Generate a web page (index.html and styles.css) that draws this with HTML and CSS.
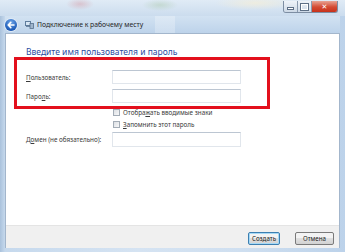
FILE: index.html
```html
<!DOCTYPE html>
<html lang="ru">
<head>
  <meta charset="utf-8">
  <title>Подключение к рабочему месту</title>
  <link rel="stylesheet" href="styles.css">
</head>
<body>

<div class="window">
  <div class="titlebar">
    <div class="caption">
      <span class="cap cap-min"><i></i></span>
      <span class="cap cap-max"><i></i></span>
      <span class="cap cap-close">✕</span>
    </div>
  </div>

  <div class="nav">
    <span class="back">
      <svg width="12" height="12" viewBox="0 0 12 12">
        <path d="M9 6H3.5M5.8 3.4L3.2 6l2.6 2.6" fill="none" stroke="#fff" stroke-width="1.6" stroke-linecap="round" stroke-linejoin="round"/>
      </svg>
    </span>
    <svg class="app-icon" width="9" height="9" viewBox="0 0 9 9">
      <rect x="0.5" y="1.5" width="5" height="4" fill="#d7e6f4" stroke="#5f7c9c"/>
      <rect x="1" y="6" width="4" height="1" fill="#6e86a3"/>
      <rect x="5" y="3.5" width="3.5" height="5" fill="#9fb5cc" stroke="#566f8c" stroke-width="0.8"/>
    </svg>
    <span class="nav-title">Подключение к рабочему месту</span>
  </div>

  <div class="panel">
    <div class="page">
      <h1>Введите имя пользователя и пароль</h1>

      <div class="form">
        <div class="row row-user">
          <label><u>П</u>ользователь:</label>
          <span class="field"></span>
        </div>
        <div class="row row-pass">
          <label>Паро<u>л</u>ь:</label>
          <span class="field"></span>
        </div>
        <div class="check check-show">
          <span class="box"></span>
          <span>Отобра<u>ж</u>ать вводимые знаки</span>
        </div>
        <div class="check check-save">
          <span class="box"></span>
          <span><u>З</u>апомнить этот пароль</span>
        </div>
        <div class="row row-domain">
          <label>Д<u>о</u>мен (не обязательно):</label>
          <span class="field"></span>
        </div>
      </div>
    </div>

    <div class="footer">
      <button class="btn btn-default">Создать</button>
      <button class="btn">Отмена</button>
    </div>
  </div>

  <div class="highlight"></div>
</div>

</body>
</html>
```

FILE: styles.css
```css
body,html { margin:0; padding:0; background:#fff; }

.window {
  position: relative;
  width: 345px;
  height: 252px;
  overflow: hidden;
  box-sizing: border-box;
  padding: 0 5px 5px;
  font-family: "Noto Sans", "DejaVu Sans", sans-serif;
  background: linear-gradient(to right, #aac2dc 0, #c6d9ed 5px, #d5e3f2 40%, #cfdff0 70%, #bcd2ea 100%);
}

/* glass title strip */
.titlebar {
  height: 16px;
  margin: 0 -5px;
  display: flex;
  justify-content: flex-end;
  background:
    radial-gradient(ellipse 14px 6px at 80px 4px, rgba(214,160,170,.5), transparent),
    radial-gradient(ellipse 18px 6px at 160px 5px, rgba(170,200,170,.45), transparent),
    radial-gradient(ellipse 40px 7px at 255px 3px, rgba(245,238,215,.7), transparent),
    linear-gradient(#e0ebf6, #cbdcee);
}
.caption {
  display: flex;
  margin: 1px 7px 0 0;
  height: 11px;
  border: 1px solid #7d8ea3;
  border-top: none;
  border-radius: 0 0 3px 3px;
  overflow: hidden;
}
.cap {
  display: flex;
  align-items: center;
  justify-content: center;
  width: 13px;
  background: linear-gradient(#eef3f9, #cdd9e6);
  border-right: 1px solid #8a9bb0;
}
.cap i { display: block; background: #fff; box-shadow: 0 0 0 1px #5d6f86; }
.cap-min i { width: 5px; height: 1px; margin-top: 4px; }
.cap-max i { width: 5px; height: 4px; background: transparent; border: 1px solid #fff; box-shadow: 0 0 0 1px #5d6f86; }
.cap-close {
  width: 25px;
  border-right: none;
  background: linear-gradient(#e8a494, #d44a32 55%, #c7321c);
  color: #fff;
  font-size: 7px;
  font-weight: bold;
}

/* navigation row */
.nav {
  height: 17px;
  display: flex;
  align-items: center;
  background:
    repeating-linear-gradient(to right, transparent 0 150px, rgba(255,255,255,.25) 150px 170px, transparent 170px 185px),
    linear-gradient(#d2e2f2, #bdd3ea);
}
.back {
  width: 12px;
  height: 12px;
  border-radius: 50%;
  background: radial-gradient(circle at 50% 30%, #6fa6e8, #1d5bb8 70%, #17479a);
  box-shadow: 0 0 0 1px #dde9f6;
  display: flex;
}
.app-icon { margin-left: 8px; }
.nav-title {
  margin-left: 3px;
  font-size: 6.8px;
  color: #262626;
}

.panel {
  height: 214px;
  display: flex;
  flex-direction: column;
  border: 1px solid #a3b6cc;
  border-bottom: none;
  background: #fff;
}

.page {
  flex: 1;
  padding: 12px 0 0 20px;
}
h1 {
  margin: 0;
  font-size: 8.5px;
  line-height: 11px;
  font-weight: normal;
  color: #2a4aa0;
}

.form {
  margin-top: 13px;
  font-size: 6.3px;
  color: #3a3a3a;
}
.row {
  display: flex;
  align-items: center;
}
.row label { width: 86px; }
.field {
  width: 129px;
  height: 14px;
  box-sizing: border-box;
  border: 1px solid #e1e6ec;
  border-top-color: #bcc6d2;
  background: #fff;
}
.row-pass { margin-top: 5px; }
.row-domain { margin-top: 3px; }
.row-domain .field { height: 15px; }

.check {
  display: flex;
  align-items: center;
  gap: 3px;
  height: 10px;
  margin-left: 87px;
}
.check-show { margin-top: 4px; }
.check-save { margin-top: 2px; }
.box {
  width: 7px;
  height: 7px;
  box-sizing: border-box;
  border: 1px solid #a3acb6;
  background: linear-gradient(135deg, #dcdfe3, #f7f8f9);
}

.footer {
  height: 23px;
  display: flex;
  justify-content: flex-end;
  align-items: flex-start;
  gap: 15px;
  padding: 6px 5px 0 0;
  box-sizing: border-box;
  background: #f0f0f0;
  border-top: 1px solid #e4e4e4;
}
.btn {
  height: 13px;
  padding: 0;
  width: 39px;
  font-family: inherit;
  font-size: 6.2px;
  color: #222;
  border: 1px solid #7a7a7a;
  border-radius: 2px;
  background: linear-gradient(#f3f3f3 50%, #e0e0e0 50%, #d2d2d2);
}
.btn-default {
  width: 32px;
  border-color: #3c7fb1;
  box-shadow: inset 0 0 0 1px #a6d9f6;
}

/* annotation drawn over the dialog */
.highlight {
  position: absolute;
  left: 14px;
  top: 57px;
  width: 250px;
  height: 46px;
  border: 3px solid #e3101d;
}
```
